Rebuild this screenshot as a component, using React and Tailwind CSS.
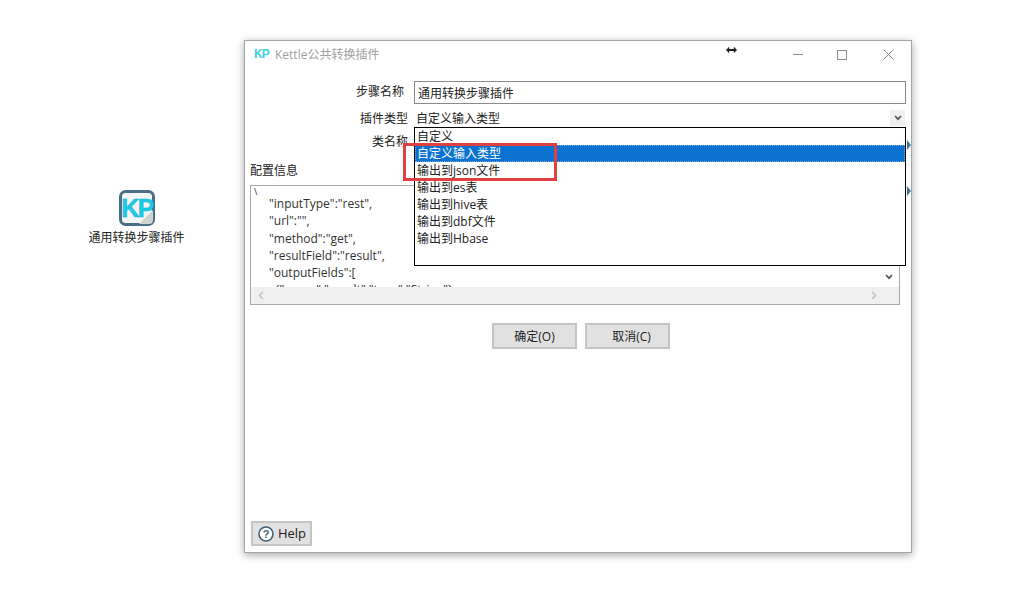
import React from "react";

const font = { fontFamily: '"Open Sans","Noto Sans CJK SC",sans-serif' };

function Chevron({ className = "" }) {
  return (
    <svg width="8" height="6" viewBox="0 0 8 6" className={className}>
      <path d="M1 1l3 3.2L7 1" fill="none" stroke="#555" strokeWidth="1.7" />
    </svg>
  );
}

function Row({ label, labelClass, children, rowClass }) {
  return (
    <div className={`flex items-center ${rowClass}`}>
      <div className={`shrink-0 text-right ${labelClass}`}>{label}</div>
      {children}
    </div>
  );
}

function KpIcon({ size }) {
  return (
    <svg width={size} height={size} viewBox="0 0 36 36">
      <rect x="1.5" y="1.5" width="33" height="33" rx="5" fill="#f4f6f6" stroke="#4a7088" strokeWidth="3" />
      <path d="M34 20v10a4 4 0 0 1-4 4H20z" fill="#cfd3d2" />
      <text x="18" y="27" textAnchor="middle" fontFamily="Liberation Sans" fontWeight="700" fontSize="25" fill="#1ccbe8" stroke="#0fb0d6" strokeWidth="0.5" letterSpacing="-1.5">KP</text>
    </svg>
  );
}

const items = ["自定义", "自定义输入类型", "输出到json文件", "输出到es表", "输出到hive表", "输出到dbf文件", "输出到Hbase"];
const code = [`"inputType":"rest",`, `"url":"",`, `"method":"get",`, `"resultField":"result",`, `"outputFields":[`];

export default function App() {
  return (
    <div className="w-[1019px] h-[596px] bg-white flex overflow-hidden text-[12px] leading-[17px] text-[#222]" style={font}>
      <div className="w-[244px] shrink-0 pt-[190px] pl-[88px]">
        <div className="w-[97px] flex flex-col items-center gap-[3px]">
          <KpIcon size={36} />
          <div className="whitespace-nowrap">通用转换步骤插件</div>
        </div>
      </div>

      <div className="relative mt-[40px] w-[668px] h-[513px] bg-white border border-[#a6a6a6] shadow-[0_2px_8px_rgba(0,0,0,0.35)] flex flex-col">
        <div className="h-[29px] shrink-0 flex items-center pl-[9px] pb-[2px] text-[#a0a0a0]">
          <span className="w-[16px] mr-[5px] font-bold text-[12px] text-[#3fd0e6] tracking-[-1px]" style={{ fontFamily: "Liberation Sans" }}>KP</span>
          <span>Kettle公共转换插件</span>
          <span className="ml-auto flex items-center">
            <span className="w-[10px] h-px bg-[#8a8a8a]"></span>
            <span className="ml-[34px] w-[10px] h-[10px] border border-[#8a8a8a]"></span>
            <svg width="11" height="11" viewBox="0 0 11 11" className="ml-[36px] mr-[17px]">
              <path d="M.5.5l10 10M10.500.5l-10 10" stroke="#8a8a8a" strokeWidth="1" />
            </svg>
          </span>
        </div>

        <div className="flex flex-col pt-[11px] pr-[5px]">
          <Row label="步骤名称" labelClass="w-[159px] -mt-[3px]" rowClass="h-[23px]">
            <div className="ml-[10px] flex-1 h-[23px] border border-[#8a8a8a] px-[3px] pt-[1px] flex items-center">通用转换步骤插件</div>
          </Row>
          <Row label="插件类型" labelClass="w-[163px]" rowClass="mt-[5px] h-[18px]">
            <div className="ml-[8px] flex-1 flex items-center justify-between">
              <span>自定义输入类型</span>
              <span className="w-[15px] h-[16px] mr-[1px] bg-[#f0f0f0] flex items-center justify-center"><Chevron /></span>
            </div>
          </Row>
          <Row label="类名称" labelClass="w-[163px]" rowClass="mt-[6px] h-[17px]">
            <div className="flex-1"></div>
          </Row>
        </div>

        <div className="pl-[5px] pr-[11px] mt-[12px] flex flex-col">
          <div className="h-[17px]">配置信息</div>
          <div className="mt-[6px] h-[120px] border border-[#a9a9a9] flex flex-col overflow-hidden">
            <div className="flex-1 overflow-hidden pl-[3px] leading-[17.3px] text-[#333] relative">
              <div className="text-[9px] leading-[12px]">\</div>
              <div className="pl-[15px] -mt-[3px]">
                {code.map((c) => <div key={c} className="h-[17.3px] whitespace-nowrap">{c}</div>)}
                <div className="h-[17.3px] pl-[6px] whitespace-nowrap">{`{"name":"result","type":"String"}`}</div>
              </div>
              <Chevron className="absolute right-[6px] top-[88px]" />
            </div>
            <div className="h-[17px] shrink-0 bg-[#f0f0f0] flex items-center justify-between pl-[7px] pr-[22px]">
              <svg width="6" height="9" viewBox="0 0 6 9"><path d="M5 1L1.500 4.500 5 8" fill="none" stroke="#c2c2c2" strokeWidth="1.6" /></svg>
              <svg width="6" height="9" viewBox="0 0 6 9"><path d="M1 1l3.500 3.500L1 8" fill="none" stroke="#c2c2c2" strokeWidth="1.6" /></svg>
            </div>
          </div>
        </div>

        <div className="mt-[18px] flex justify-center gap-[8px] pl-[6px]">
          <button className="w-[85px] h-[26px] bg-[#e1e1e1] border-2 border-[#c4c4c4]">确定(O)</button>
          <button className="w-[85px] h-[26px] pl-[8px] bg-[#e1e1e1] border-2 border-[#c4c4c4]">取消(C)</button>
        </div>

        <div className="mt-auto pl-[6px] pb-[6px]">
          <button className="w-[61px] h-[25px] pl-[1px] bg-[#e1e1e1] border-2 border-[#c4c4c4] flex items-center justify-center gap-[4px] text-[13px]">
            <svg width="16" height="16" viewBox="0 0 16 16">
              <circle cx="8" cy="8" r="7" fill="white" stroke="#3f5f78" strokeWidth="1.6" />
              <text x="8" y="12" textAnchor="middle" fontSize="11" fontWeight="700" fontFamily="Liberation Sans" fill="#3f5f78">?</text>
            </svg>
            Help
          </button>
        </div>

        {/* open select list, floats above the form */}
        <div className="absolute left-[169px] top-[86px] w-[492px] h-[139px] bg-white border border-black z-10 text-[#222]">
          {items.map((t, i) => (
            <div key={t} className={`h-[17px] pl-[2px] leading-[17px] whitespace-nowrap ${i === 1 ? "bg-[#0a73d2] text-white outline-1 outline-dotted outline-[#7aa7cc] -outline-offset-1" : ""}`}>{t}</div>
          ))}
        </div>
        {/* red annotation */}
        <div className="absolute left-[158px] top-[102px] z-20 w-[154px] h-[38px] border-[3px] border-[#e0403f]"></div>
        {/* arrows peeking out behind the list */}
        <svg width="6" height="10" viewBox="0 0 6 10" className="absolute left-[661px] top-[99px]"><path d="M1 0l4 5-4 5z" fill="#44749c" /></svg>
        <svg width="6" height="10" viewBox="0 0 6 10" className="absolute left-[661px] top-[145px]"><path d="M1 0l4 5-4 5z" fill="#44749c" /></svg>
        {/* mouse cursor */}
        <svg width="11" height="8" viewBox="0 0 12 8" className="absolute left-[481px] top-[5px]">
          <path d="M0 4l3.500-3.500V3h5V.5L12 4 8.500 7.500V5h-5v2.500z" fill="#222" />
        </svg>
      </div>
    </div>
  );
}
